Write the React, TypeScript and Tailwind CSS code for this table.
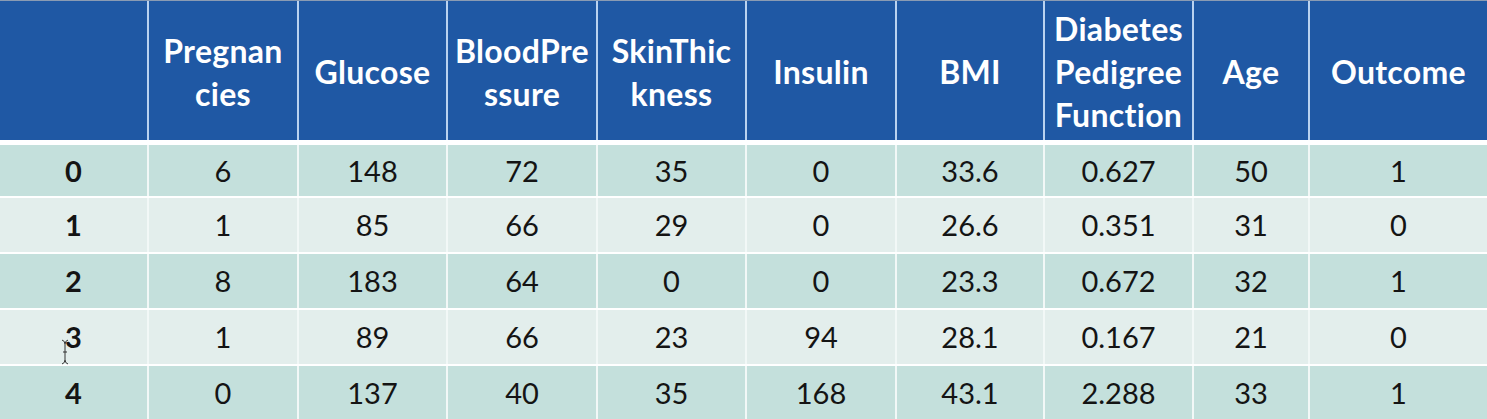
import { Fragment } from 'react'

const headers: string[][] = [
  [],
  ['Pregnan', 'cies'],
  ['Glucose'],
  ['BloodPre', 'ssure'],
  ['SkinThic', 'kness'],
  ['Insulin'],
  ['BMI'],
  ['Diabetes', 'Pedigree', 'Function'],
  ['Age'],
  ['Outcome'],
]

const rows: string[][] = [
  ['0', '6', '148', '72', '35', '0', '33.6', '0.627', '50', '1'],
  ['1', '1', '85', '66', '29', '0', '26.6', '0.351', '31', '0'],
  ['2', '8', '183', '64', '0', '0', '23.3', '0.672', '32', '1'],
  ['3', '1', '89', '66', '23', '94', '28.1', '0.167', '21', '0'],
  ['4', '0', '137', '40', '35', '168', '43.1', '2.288', '33', '1'],
]

const rowHeights = ['h-[51px]', 'h-[54px]', 'h-[54px]', 'h-[54px]', 'h-[53px]']

const cols =
  'grid grid-cols-[147px_148px_147px_148px_147px_148px_146px_147px_114px_1fr] gap-x-[2px]'

export default function App() {
  return (
    <div
      className="relative w-[1487px] h-[419px] bg-white overflow-hidden"
      style={{ fontFamily: 'Lato, "Open Sans", sans-serif' }}
    >
      {/* header */}
      <div className={`${cols} bg-[#b9d2f0] border-t border-[#8a9bb3]`}>
        {headers.map((h, i) => (
          <div
            key={i}
            className="h-[139px] bg-[#1f58a4] flex flex-col items-center justify-center pt-[2px] text-white font-bold text-[32px] tracking-[0.3px] leading-[43px]"
          >
            {h.map((line) => (
              <span key={line}>{line}</span>
            ))}
          </div>
        ))}
      </div>

      <div className="h-[5px]" />

      {/* body */}
      <div className="flex flex-col gap-y-[2px] bg-white">
        {rows.map((r, ri) => (
          <div key={ri} className={`${cols} bg-[#f2f8f7]`}>
            {r.map((v, ci) => (
              <Fragment key={ci}>
                <div
                  className={`${rowHeights[ri]} flex items-center justify-center text-[29px] text-[#141414] ${
                    ri % 2 === 0 ? 'bg-[#c4e0dc]' : 'bg-[#e3eeec]'
                  } ${ci === 0 ? 'font-bold' : ''}`}
                >
                  {v}
                </div>
              </Fragment>
            ))}
          </div>
        ))}
      </div>

      {/* text cursor */}
      <svg
        className="absolute left-[60px] top-[338px]"
        width="10"
        height="28"
        viewBox="0 0 10 28"
        fill="none"
        stroke="#333"
        strokeWidth="1"
      >
        <path d="M2 2 Q5 3 5 6 V22 Q5 25 2 26 M8 2 Q5 3 5 6 M5 22 Q5 25 8 26 M3 14 H7" />
      </svg>
    </div>
  )
}
